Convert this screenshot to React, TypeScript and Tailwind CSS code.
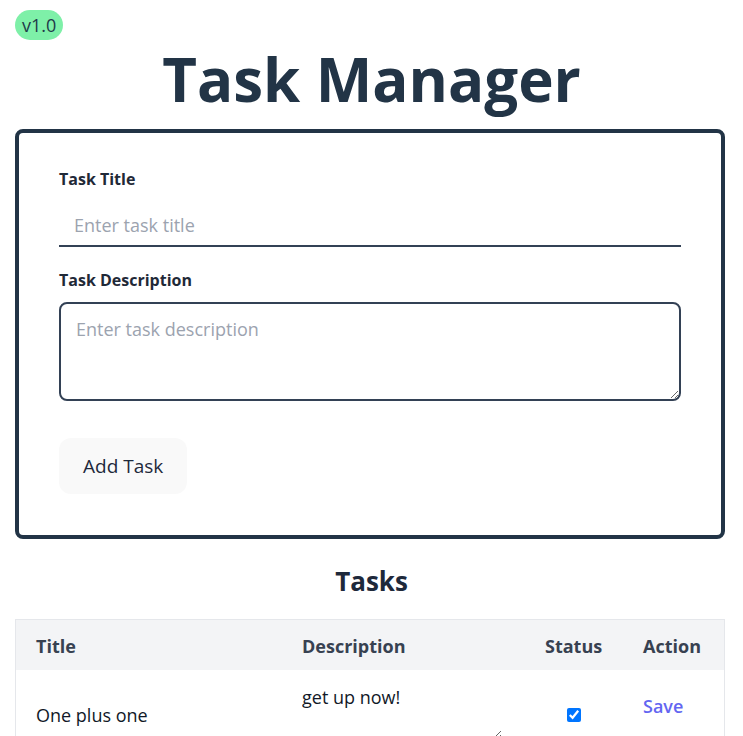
import React from "react";

export default function App() {
  return (
    <div className="min-h-screen bg-white text-[#1e293b]" style={{ fontFamily: "'Open Sans', 'Noto Sans', sans-serif" }}>
      <div className="px-[15px] pt-[10px]">
        <span className="inline-flex h-[30px] items-center rounded-full bg-[#7ef0a8] px-[7px] text-[18px] text-[#1e3a4a]">v1.0</span>
      </div>
      <h1 className="-mt-[3px] text-center text-[60px] font-bold leading-[84px] text-[#223446]">Task Manager</h1>
      <div className="ml-[15px] mr-[18px] mt-[8px] rounded-lg border-4 border-[#223446] px-10 pb-[41px] pt-[34px]">
        <label className="block text-[16px] font-bold text-[#1f2937]">Task Title</label>
        <input
          className="mt-[13px] block h-[43px] w-full border-b-2 border-[#334155] px-[15px] text-[18px] outline-none placeholder:text-[#9ca3af]"
          placeholder="Enter task title"
        />
        <label className="mt-[21px] block text-[16px] font-bold text-[#1f2937]">Task Description</label>
        <textarea
          className="mt-[10px] block h-[99px] w-full rounded-lg border-2 border-[#334155] px-[15px] py-[12px] text-[18px] outline-none placeholder:text-[#9ca3af]"
          placeholder="Enter task description"
        />
        <button className="mt-[37px] h-[56px] rounded-xl bg-[#f9f9f9] px-[24px] text-[19px] font-medium text-[#1e293b]">Add Task</button>
      </div>
      <h2 className="mt-[23px] text-center text-[26px] font-bold text-[#1e293b]">Tasks</h2>
      <div className="ml-[15px] mr-[18px] mt-[18px] border border-[#e5e7eb]">
        <table className="w-full border-collapse text-left">
          <thead className="bg-[#f3f4f6]">
            <tr className="h-[50px] text-[18px] font-bold text-[#374151]">
              <th className="w-[266px] px-5 pt-[2px]">Title</th>
              <th className="w-[243px] px-5 pt-[2px]">Description</th>
              <th className="w-[98px] px-5 pt-[2px]">Status</th>
              <th className="px-5 pt-[2px]">Action</th>
            </tr>
          </thead>
          <tbody>
            <tr className="h-[90px] text-[18px] text-[#111827]">
              <td className="px-5">One plus one</td>
              <td className="px-5 pt-[14px] align-top">
                <textarea className="block h-[55px] w-[200px] resize-y bg-transparent text-[18px] outline-none" defaultValue="get up now!" />
              </td>
              <td className="px-5 text-center">
                <input type="checkbox" defaultChecked className="h-[14px] w-[14px] accent-[#0075ff]" />
              </td>
              <td className="px-5 pt-[23px] align-top">
                <button className="font-semibold text-[#6366f1]">Save</button>
              </td>
            </tr>
          </tbody>
        </table>
      </div>
    </div>
  );
}
